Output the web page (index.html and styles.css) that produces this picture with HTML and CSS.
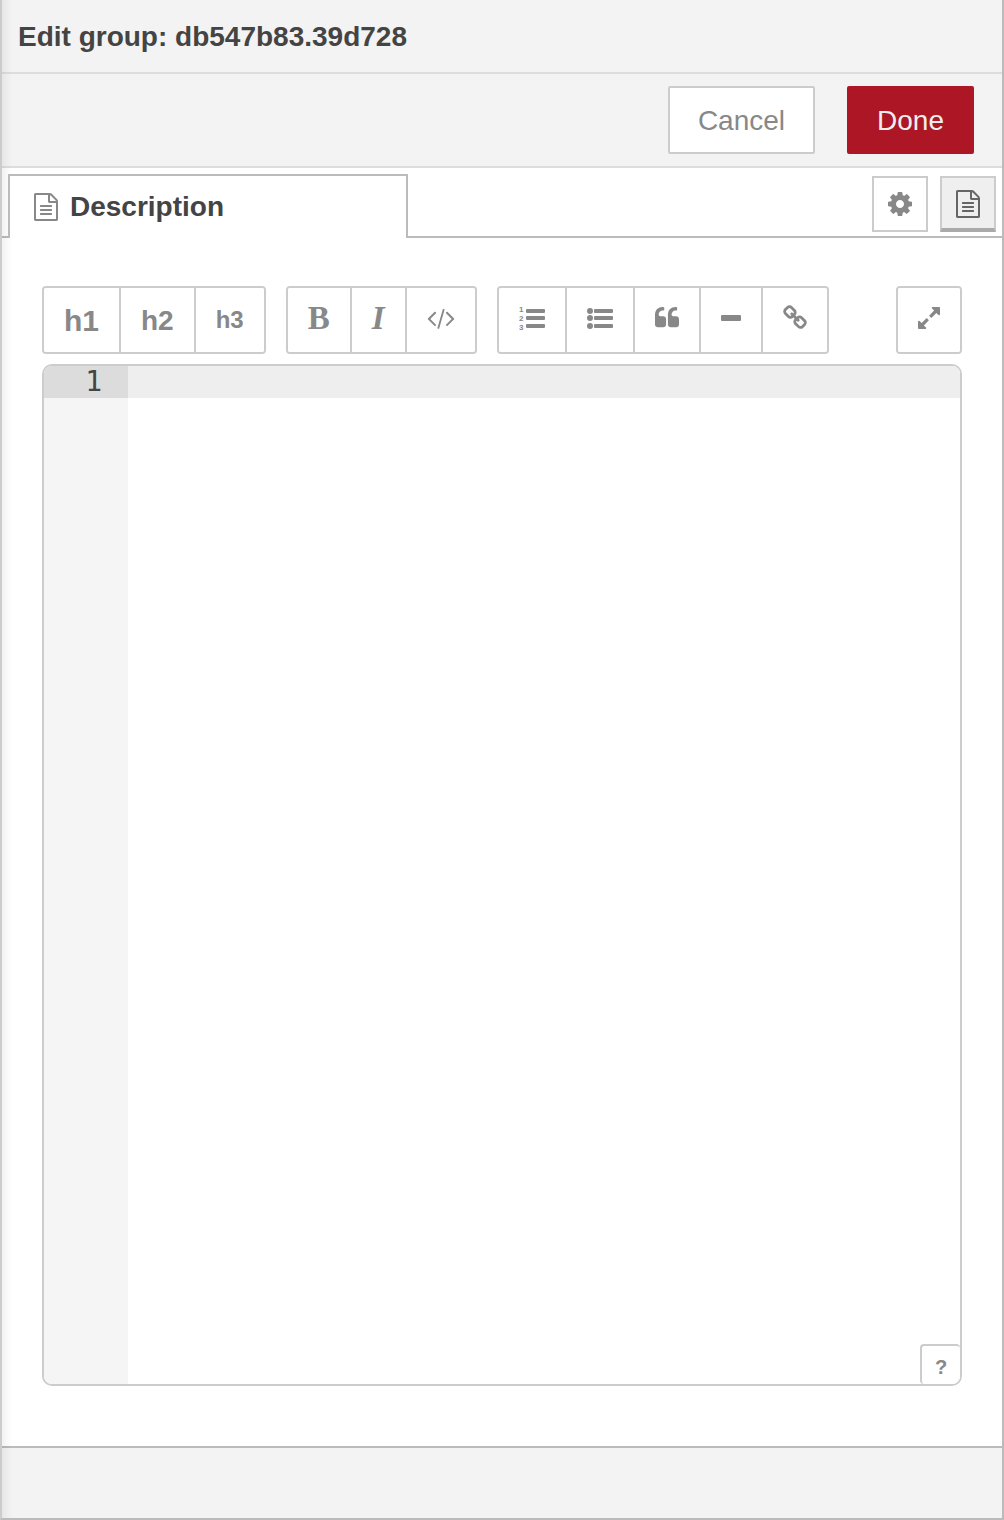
FILE: index.html
```html
<!DOCTYPE html>
<html lang="en">
<head>
  <meta charset="UTF-8" />
  <meta name="viewport" content="width=device-width, initial-scale=1.0"/>
  <title>Edit group</title>
  <link rel="stylesheet" href="styles.css">
</head>
<body>
  <!-- Shared icon shapes -->
  <svg class="icon-defs" aria-hidden="true">
    <symbol id="icon-file" viewBox="0 0 1536 1792">
      <path d="M1468 380q28 28 48 76t20 88v1152q0 40-28 68t-68 28h-1344q-40 0-68-28t-28-68v-1600q0-40 28-68t68-28h896q40 0 88 20t76 48zm-444-244v376h376q-10-29-22-41l-313-313q-12-12-41-22zm384 1528v-1024h-416q-40 0-68-28t-28-68v-416h-768v1536h1280zm-1024-864q0-14 9-23t23-9h704q14 0 23 9t9 23v64q0 14-9 23t-23 9h-704q-14 0-23-9t-9-23v-64zm736 224q14 0 23 9t9 23v64q0 14-9 23t-23 9h-704q-14 0-23-9t-9-23v-64q0-14 9-23t23-9h704zm0 256q14 0 23 9t9 23v64q0 14-9 23t-23 9h-704q-14 0-23-9t-9-23v-64q0-14 9-23t23-9h704z"/>
    </symbol>
  </svg>

  <div class="tray">
    <header class="tray-header">
      <h1>Edit group: db547b83.39d728</h1>
    </header>

    <div class="tray-buttons">
      <button type="button" class="btn">Cancel</button>
      <button type="button" class="btn btn-primary">Done</button>
    </div>

    <div class="tab-bar">
      <a href="#description" class="tab">
        <svg class="icon-file"><use href="#icon-file"/></svg>
        Description
      </a>
      <div class="tab-buttons">
        <button type="button" class="tab-button" aria-label="Properties">
          <svg class="icon-cog" viewBox="0 0 1792 1792"><path d="M1152 896q0-106-75-181t-181-75-181 75-75 181 75 181 181 75 181-75 75-181zm512-109v222q0 12-8 23t-20 13l-185 28q-19 54-39 91 35 50 107 138 10 12 10 25t-9 23q-27 37-99 108t-94 71q-12 0-26-9l-138-108q-44 23-91 38-16 136-29 186-7 28-36 28h-222q-14 0-24.500-8.500t-11.500-21.500l-28-184q-49-16-90-37l-141 107q-10 9-25 9-14 0-25-11-126-114-165-168-7-10-7-23 0-12 8-23 15-21 51-66.500t54-70.500q-27-50-41-99l-183-27q-13-2-21-12.500t-8-23.500v-222q0-12 8-23t19-13l186-28q14-46 39-92-40-57-107-138-10-12-10-24 0-10 9-23 26-36 98.500-107.500t94.500-71.500q13 0 26 10l138 107q44-23 91-38 16-136 29-186 7-28 36-28h222q14 0 24.500 8.500t11.500 21.500l28 184q49 16 90 37l142-107q9-9 24-9 13 0 25 10 129 119 165 170 7 8 7 22 0 12-8 23-15 21-51 66.500t-54 70.500q26 50 41 98l183 28q13 2 21 12.500t8 23.500z"/></svg>
        </button>
        <button type="button" class="tab-button selected" aria-label="Description">
          <svg class="icon-file"><use href="#icon-file"/></svg>
        </button>
      </div>
    </div>

    <main class="panel" id="description">
      <div class="toolbar">
        <div class="button-group">
          <button type="button" class="size-h1">h1</button>
          <button type="button" class="size-h2">h2</button>
          <button type="button" class="size-h3">h3</button>
        </div>
        <div class="button-group">
          <button type="button" class="bold">B</button>
          <button type="button" class="italic">I</button>
          <button type="button" aria-label="Code">
            <svg class="icon-code" viewBox="-64 0 1920 1792"><path d="M553 1399l-50 50q-10 10-23 10t-23-10l-466-466q-10-10-10-23t10-23l466-466q10-10 23-10t23 10l50 50q10 10 10 23t-10 23l-393 393 393 393q10 10 10 23t-10 23zm591-1067l-373 1291q-4 13-15.500 19.500t-23.500 2.500l-62-17q-13-4-19.500-15.500t-2.500-24.500l373-1291q4-13 15.500-19.500t23.500-2.500l62 17q13 4 19.500 15.500t2.500 24.500zm657 651l-466 466q-10 10-23 10t-23-10l-50-50q-10-10-10-23t10-23l393-393-393-393q-10-10-10-23t10-23l50-50q10-10 23-10t23 10l466 466q10 10 10 23t-10 23z"/></svg>
          </button>
        </div>
        <div class="button-group">
          <button type="button" aria-label="Ordered list">
            <svg class="icon-list" viewBox="0 0 26 28">
              <text x="0" y="8">1</text>
              <text x="0" y="17">2</text>
              <text x="0" y="26">3</text>
              <rect x="7" y="5" width="19" height="4" rx="1"/>
              <rect x="7" y="12" width="19" height="4" rx="1"/>
              <rect x="7" y="20" width="19" height="4" rx="1"/>
            </svg>
          </button>
          <button type="button" aria-label="Unordered list">
            <svg class="icon-list" viewBox="0 0 26 28">
              <circle cx="3" cy="7" r="3"/>
              <circle cx="3" cy="14" r="3"/>
              <circle cx="3" cy="22" r="3"/>
              <rect x="7" y="5" width="19" height="4" rx="1"/>
              <rect x="7" y="12" width="19" height="4" rx="1"/>
              <rect x="7" y="20" width="19" height="4" rx="1"/>
            </svg>
          </button>
          <button type="button" aria-label="Quote">
            <svg class="icon-medium" viewBox="64 0 1664 1792"><path d="M832 960v384q0 80-56 136t-136 56h-384q-80 0-136-56t-56-136v-704q0-104 40.500-198.500t109.500-163.500 163.500-109.500 198.500-40.500h64q26 0 45 19t19 45v128q0 26-19 45t-45 19h-64q-106 0-181 75t-75 181v32q0 40 28 68t68 28h224q80 0 136 56t56 136zm896 0v384q0 80-56 136t-136 56h-384q-80 0-136-56t-56-136v-704q0-104 40.500-198.500t109.500-163.500 163.500-109.500 198.500-40.500h64q26 0 45 19t19 45v128q0 26-19 45t-45 19h-64q-106 0-181 75t-75 181v32q0 40 28 68t68 28h224q80 0 136 56t56 136z"/></svg>
          </button>
          <button type="button" aria-label="Horizontal rule">
            <svg class="icon-minus" viewBox="0 0 20 26"><rect x="0" y="10" width="20" height="6" rx="1"/></svg>
          </button>
          <button type="button" aria-label="Link">
            <svg class="icon-medium" viewBox="64 0 1664 1792"><path d="M1520 1216q0-40-28-68l-208-208q-28-28-68-28-42 0-72 32 3 3 19 18.500t21.500 21.500 15 19 13 25.500 3.500 27.500q0 40-28 68t-68 28q-15 0-27.500-3.500t-25.500-13-19-15-21.500-21.500-18.500-19q-33 31-33 73 0 40 28 68l206 207q27 27 68 27 40 0 68-26l147-146q28-28 28-67zm-703-705q0-40-28-68l-206-207q-28-28-68-28-39 0-68 27l-147 146q-28 28-28 67 0 40 28 68l208 208q27 27 68 27 42 0 72-31-3-3-19-18.500t-21.500-21.500-15-19-13-25.500-3.500-27.500q0-40 28-68t68-28q15 0 27.500 3.500t25.500 13 19 15 21.500 21.500 18.500 19q33-31 33-73zm895 705q0 120-85 203l-147 146q-83 83-203 83-121 0-204-85l-206-207q-83-83-83-203 0-123 88-209l-88-88q-86 88-208 88-120 0-204-84l-208-208q-84-84-84-204t85-203l147-146q83-83 203-83 121 0 204 85l206 207q83 83 83 203 0 123-88 209l88 88q86-88 208-88 120 0 204 84l208 208q84 84 84 204z"/></svg>
          </button>
        </div>
        <div class="button-group expand">
          <button type="button" aria-label="Expand">
            <svg class="icon-expand" viewBox="128 0 1536 1792"><path d="M883 1056q0 13-10 23l-332 332 144 144q19 19 19 45t-19 45-45 19h-448q-26 0-45-19t-19-45v-448q0-26 19-45t45-19 45 19l144 144 332-332q10-10 23-10t23 10l114 114q10 10 10 23zm781-864v448q0 26-19 45t-45 19-45-19l-144-144-332 332q-10 10-23 10t-23-10l-114-114q-10-10-10-23t10-23l332-332-144-144q-19-19-19-45t19-45 45-19h448q26 0 45 19t19 45z"/></svg>
          </button>
        </div>
      </div>

      <div class="editor">
        <div class="gutter"><div class="line-number">1</div></div>
        <textarea aria-label="Description"></textarea>
        <button type="button" class="help">?</button>
      </div>
    </main>

    <footer class="tray-footer"></footer>
  </div>
</body>
</html>
```

FILE: styles.css
```css
* {
  box-sizing: border-box;
}

body {
  margin: 0;
  font-family: "Helvetica Neue", "Liberation Sans", Arial, sans-serif;
  font-size: 28px;
  color: #444;
}

button {
  font-family: inherit;
  color: #888;
  background: #fff;
  cursor: pointer;
}

svg {
  display: block;
  fill: currentColor;
}

.icon-defs {
  position: absolute;
  width: 0;
  height: 0;
}

.tray {
  position: relative;
  display: flex;
  flex-direction: column;
  min-height: 100vh;
  border: 2px solid #bbb;
  border-top: none;
  border-left-color: #ccc;
  background: #fff;
}

/* soft shadow down the left edge */
.tray::before {
  content: "";
  position: absolute;
  top: 0;
  bottom: 0;
  left: 0;
  width: 10px;
  background: linear-gradient(to right, rgba(0, 0, 0, 0.05), rgba(0, 0, 0, 0));
  pointer-events: none;
}

.tray-header {
  padding: 21px 16px 19px;
  background: #f3f3f3;
  border-bottom: 2px solid #ddd;
}

h1 {
  margin: 0;
  font-size: 28px;
  line-height: 32px;
}

.tray-buttons {
  display: flex;
  justify-content: flex-end;
  gap: 32px;
  padding: 12px 28px;
  background: #f3f3f3;
  border-bottom: 2px solid #ddd;
}

.btn {
  height: 68px;
  padding: 2px 28px 0;
  border: 2px solid #ccc;
  border-radius: 2px;
  font-size: 28px;
}

.btn-primary {
  color: #eee;
  background: #ad1625;
  border-color: #ad1625;
}

/* Tabs */
.tab-bar {
  display: flex;
  justify-content: space-between;
  height: 70px;
  padding: 6px 6px 0;
  border-bottom: 2px solid #bbb;
}

.tab {
  position: relative;
  display: flex;
  align-items: center;
  gap: 12px;
  width: 400px;
  height: 64px;
  padding: 0 24px;
  background: #fff;
  border: 2px solid #bbb;
  border-bottom: none;
  border-radius: 1px;
  color: #444;
  font-weight: bold;
  text-decoration: none;
}

.tab svg {
  color: #888;
}

.tab-buttons {
  display: flex;
  gap: 12px;
  padding-top: 2px;
}

.tab-button {
  display: flex;
  align-items: center;
  justify-content: center;
  width: 56px;
  height: 56px;
  padding: 0;
  border: 2px solid #ccc;
}

.tab-button.selected {
  padding-top: 2px;
  color: #666;
  background: #efefef;
  border-bottom: 4px solid #aaa;
}

.icon-file {
  width: 24px;
  height: 28px;
}

.icon-cog {
  width: 28px;
  height: 28px;
}

/* Description panel */
.panel {
  flex: 1;
  display: flex;
  flex-direction: column;
  gap: 10px;
  padding: 48px 40px 60px;
}

.toolbar {
  display: flex;
  gap: 20px;
}

.button-group {
  display: flex;
  height: 68px;
  border: 2px solid #ccc;
  border-radius: 4px;
  overflow: hidden;
}

.button-group button {
  padding: 0 20px 4px;
  border: none;
  font-weight: bold;
}

.button-group button + button {
  border-left: 2px solid #ccc;
}

.button-group svg {
  height: 26px;
}

.button-group .size-h1,
.button-group .size-h2,
.button-group .size-h3 {
  padding-top: 2px;
  padding-bottom: 0;
}

.button-group .size-h1 {
  font-size: 30px;
}

.button-group .size-h2 {
  font-size: 28px;
}

.button-group .size-h3 {
  padding-bottom: 2px;
  font-size: 24px;
}

.button-group .bold,
.button-group .italic {
  font-family: "Liberation Serif", "Times New Roman", serif;
  font-size: 33px;
}

.button-group .italic {
  font-style: italic;
}

.expand {
  margin-left: auto;
}

.icon-code {
  width: 28px;
}

.button-group .icon-list {
  width: 26px;
  height: 28px;
}

.icon-list text {
  font: bold 8px "Liberation Sans", Arial, sans-serif;
}

.icon-medium {
  width: 24px;
}

.icon-minus {
  width: 20px;
}

.icon-expand {
  width: 22px;
}

.editor {
  position: relative;
  flex: 1;
  display: flex;
  border: 2px solid #ccc;
  border-radius: 10px;
  overflow: hidden;
  font: 28px/32px "DejaVu Sans Mono", monospace;
}

.gutter {
  width: 84px;
  background: #f5f5f5;
}

.line-number {
  padding-right: 26px;
  background: #dcdcdc;
  text-align: right;
}

textarea {
  flex: 1;
  min-width: 0;
  padding: 0 8px;
  border: none;
  outline: none;
  resize: none;
  font: inherit;
  color: inherit;
  /* active line */
  background: linear-gradient(#eee, #eee) 0 0 / 100% 32px no-repeat #fff;
}

.help {
  position: absolute;
  right: 0;
  bottom: 0;
  width: 40px;
  height: 40px;
  padding: 4px 0 0;
  border: solid #ccc;
  border-width: 2px 0 0 2px;
  border-radius: 4px 4px 8px 4px;
  font-family: "Liberation Sans", Arial, sans-serif;
  font-size: 20px;
  font-weight: bold;
}

.tray-footer {
  height: 72px;
  background: #f3f3f3;
  border-top: 2px solid #bbb;
}
```
